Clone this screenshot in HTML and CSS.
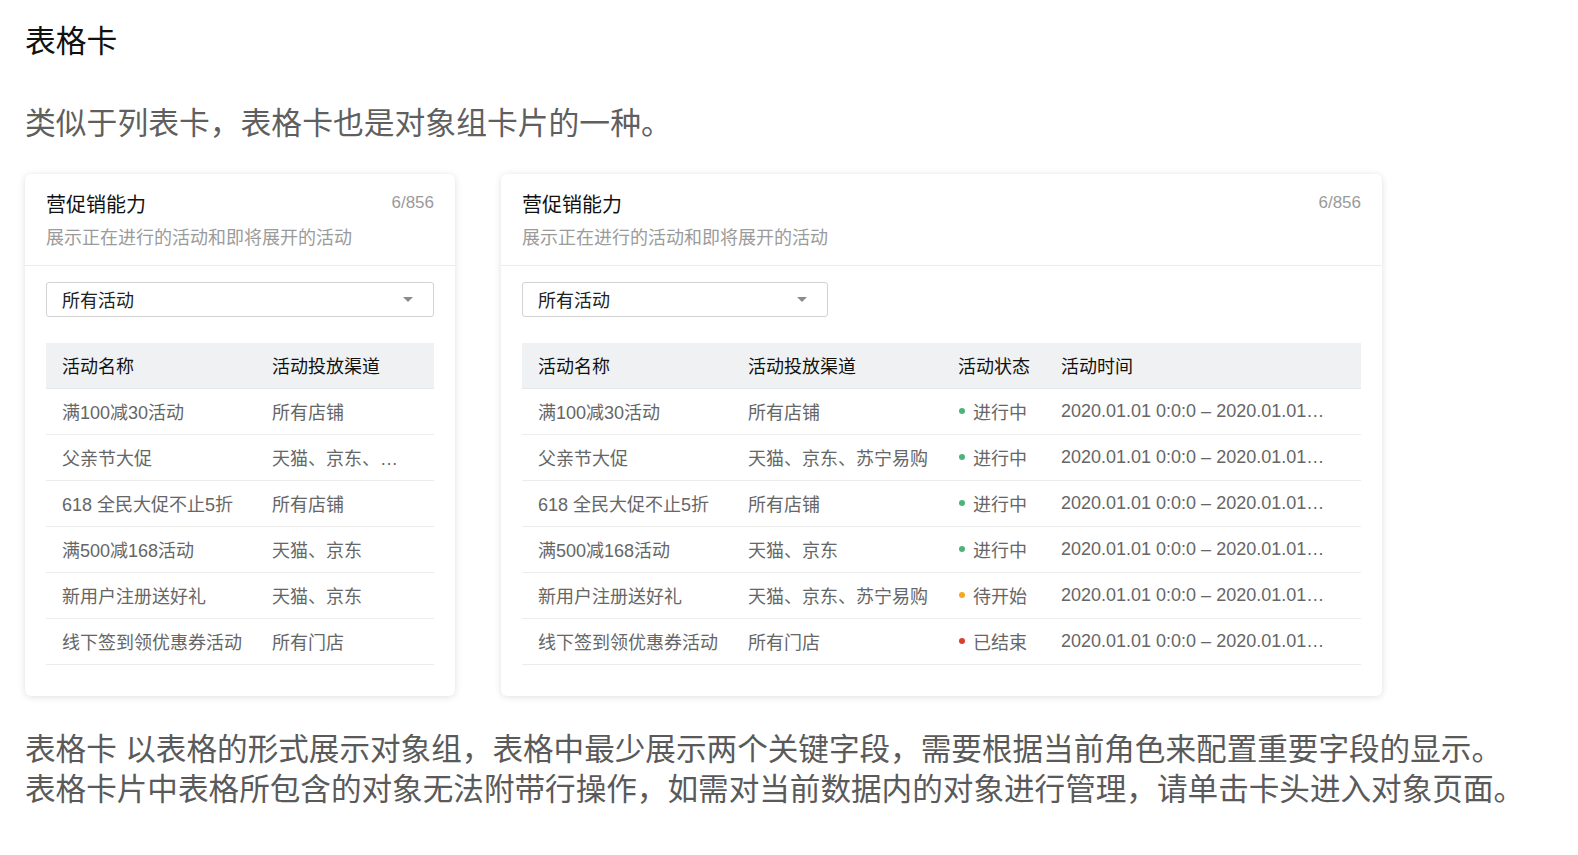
FILE: index.html
```html
<!DOCTYPE html>
<html lang="zh-CN">
<head>
<meta charset="utf-8">
<title>表格卡</title>
<link rel="stylesheet" href="styles.css">
</head>
<body>
<main class="doc">
  <h1 class="doc-title">表格卡</h1>
  <p class="doc-lead">类似于列表卡，表格卡也是对象组卡片的一种。</p>

  <div class="card-row">
    <!-- narrow card: two columns -->
    <section class="card card-narrow">
      <header class="card-head">
        <div class="card-head-top">
          <h2 class="card-title">营促销能力</h2>
          <span class="card-count">6/856</span>
        </div>
        <p class="card-desc">展示正在进行的活动和即将展开的活动</p>
      </header>
      <div class="card-body">
        <div class="select select-full">
          <span class="select-value">所有活动</span>
          <span class="select-caret"></span>
        </div>
        <table class="grid">
          <colgroup><col class="col-name"><col></colgroup>
          <thead>
            <tr><th>活动名称</th><th>活动投放渠道</th></tr>
          </thead>
          <tbody>
            <tr><td>满100减30活动</td><td><div class="clip clip-channel">所有店铺</div></td></tr>
            <tr><td>父亲节大促</td><td><div class="clip clip-channel">天猫、京东、苏宁易购</div></td></tr>
            <tr><td>618 全民大促不止5折</td><td><div class="clip clip-channel">所有店铺</div></td></tr>
            <tr><td>满500减168活动</td><td><div class="clip clip-channel">天猫、京东</div></td></tr>
            <tr><td>新用户注册送好礼</td><td><div class="clip clip-channel">天猫、京东</div></td></tr>
            <tr><td>线下签到领优惠券活动</td><td><div class="clip clip-channel">所有门店</div></td></tr>
          </tbody>
        </table>
      </div>
    </section>

    <!-- wide card: four columns -->
    <section class="card card-wide">
      <header class="card-head">
        <div class="card-head-top">
          <h2 class="card-title">营促销能力</h2>
          <span class="card-count">6/856</span>
        </div>
        <p class="card-desc">展示正在进行的活动和即将展开的活动</p>
      </header>
      <div class="card-body">
        <div class="select select-short">
          <span class="select-value">所有活动</span>
          <span class="select-caret"></span>
        </div>
        <table class="grid">
          <colgroup><col class="col-name"><col class="col-channel"><col class="col-status"><col></colgroup>
          <thead>
            <tr><th>活动名称</th><th>活动投放渠道</th><th>活动状态</th><th>活动时间</th></tr>
          </thead>
          <tbody>
            <tr><td>满100减30活动</td><td>所有店铺</td><td><span class="status status-on">进行中</span></td><td><div class="clip clip-time">2020.01.01 0:0:0 – 2020.01.01 23:59:59</div></td></tr>
            <tr><td>父亲节大促</td><td>天猫、京东、苏宁易购</td><td><span class="status status-on">进行中</span></td><td><div class="clip clip-time">2020.01.01 0:0:0 – 2020.01.01 23:59:59</div></td></tr>
            <tr><td>618 全民大促不止5折</td><td>所有店铺</td><td><span class="status status-on">进行中</span></td><td><div class="clip clip-time">2020.01.01 0:0:0 – 2020.01.01 23:59:59</div></td></tr>
            <tr><td>满500减168活动</td><td>天猫、京东</td><td><span class="status status-on">进行中</span></td><td><div class="clip clip-time">2020.01.01 0:0:0 – 2020.01.01 23:59:59</div></td></tr>
            <tr><td>新用户注册送好礼</td><td>天猫、京东、苏宁易购</td><td><span class="status status-wait">待开始</span></td><td><div class="clip clip-time">2020.01.01 0:0:0 – 2020.01.01 23:59:59</div></td></tr>
            <tr><td>线下签到领优惠券活动</td><td>所有门店</td><td><span class="status status-end">已结束</span></td><td><div class="clip clip-time">2020.01.01 0:0:0 – 2020.01.01 23:59:59</div></td></tr>
          </tbody>
        </table>
      </div>
    </section>
  </div>

  <p class="doc-note">表格卡 以表格的形式展示对象组，表格中最少展示两个关键字段，需要根据当前角色来配置重要字段的显示。<br>表格卡片中表格所包含的对象无法附带行操作，如需对当前数据内的对象进行管理，请单击卡头进入对象页面。</p>
</main>
</body>
</html>
```
FILE: styles.css
```css
* {
  box-sizing: border-box;
}

html, body {
  margin: 0;
  padding: 0;
  background: #ffffff;
}

body {
  font-family: "Liberation Sans", "Noto Sans CJK SC", sans-serif;
  color: #333333;
}

.doc {
  padding: 22px 25px 0 25px;
}

.doc-title {
  margin: 0;
  font-size: 30.8px;
  line-height: 40px;
  font-weight: 400;
  color: #111111;
}

.doc-lead {
  margin: 42px 0 0;
  font-size: 30.8px;
  line-height: 40px;
  color: #5f5f5f;
}

.card-row {
  display: flex;
  align-items: flex-start;
  gap: 46px;
  margin-top: 30px;
}

.card {
  background: #ffffff;
  border-radius: 6px;
  box-shadow: 0 1px 7px rgba(0, 0, 0, 0.13);
}

.card-narrow {
  width: 430px;
}

.card-wide {
  width: 881px;
}

/* card header */
.card-head {
  padding: 18px 21px 14px;
  border-bottom: 1px solid #ececec;
}

.card-head-top {
  display: flex;
  justify-content: space-between;
  align-items: center;
}

.card-title {
  margin: 0;
  font-size: 20px;
  line-height: 26px;
  font-weight: 400;
  color: #111111;
}

.card-count {
  font-size: 17px;
  line-height: 22px;
  color: #9a9a9a;
  margin-top: -5px;
}

.card-desc {
  margin: 7px 0 0;
  font-size: 18px;
  line-height: 26px;
  color: #9b9b9b;
}

/* card body */
.card-body {
  padding: 16px 21px 31px;
}

.select {
  display: flex;
  align-items: center;
  justify-content: space-between;
  height: 35px;
  padding: 0 20px 2px 15px;
  border: 1px solid #d2d2d2;
  border-radius: 3px;
  font-size: 18px;
  color: #222222;
}

.select-full {
  width: 100%;
}

.select-short {
  width: 306px;
}

.select-caret {
  width: 0;
  height: 0;
  margin-top: 2px;
  border-left: 5px solid transparent;
  border-right: 5px solid transparent;
  border-top: 5px solid #8c8c8c;
}

/* data table */
.grid {
  width: 100%;
  margin-top: 26px;
  border-collapse: collapse;
  table-layout: fixed;
  font-size: 18px;
}

.col-name,
.col-channel {
  width: 210px;
}

.col-status {
  width: 103px;
}

.grid th {
  height: 45px;
  padding: 0 0 0 16px;
  text-align: left;
  font-weight: 400;
  color: #111111;
  background: #f0f1f3;
  border-bottom: 1px solid #e6e7ea;
  white-space: nowrap;
}

.grid td {
  height: 46px;
  padding: 0 0 0 16px;
  color: #666666;
  border-bottom: 1px solid #ececec;
  white-space: nowrap;
}

.clip {
  overflow: hidden;
  white-space: nowrap;
  text-overflow: ellipsis;
}

.clip-channel {
  max-width: 132px;
}

.clip-time {
  max-width: 264px;
}

.status {
  display: inline-flex;
  align-items: center;
  gap: 8px;
  margin-left: 1px;
}

.status::before {
  content: "";
  width: 6px;
  height: 6px;
  border-radius: 50%;
  background: currentColor;
}

.status-on::before {
  background: #4fb27a;
}

.status-wait::before {
  background: #f5a623;
}

.status-end::before {
  background: #d8402b;
}

.doc-note {
  margin: 33px 0 0;
  font-size: 30.6px;
  line-height: 40px;
  color: #5a5a5a;
}
```
